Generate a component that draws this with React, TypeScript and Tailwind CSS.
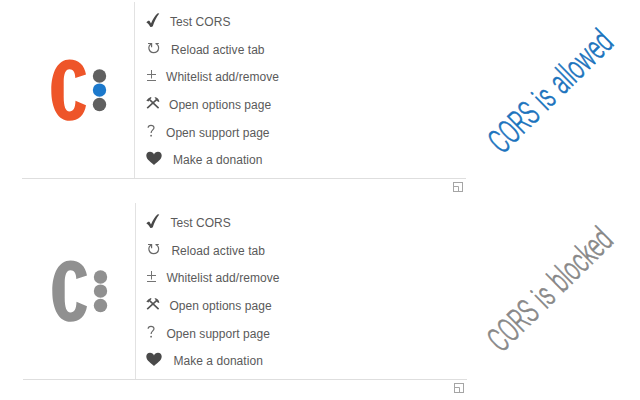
import React from "react";

const glyph = "shrink-0 overflow-visible";

function CheckIcon() {
  return (
    <svg className={glyph} width="14" height="15" viewBox="0 0 14 15">
      <path d="M-0.600 9.400C0.400 8 1.600 7.500 2.600 8L4 10.400C5.800 6 8.200 2.400 10.800 0.300L12.300 0.500C9.500 4 7.300 8.500 5.800 13.200C5.100 14 3.800 14.100 3.200 13.700C2.300 11.700 1.100 10.200 -0.600 9.400Z" fill="#484848" />
    </svg>
  );
}

function ReloadIcon() {
  return (
    <svg className={glyph} width="13" height="12" viewBox="0 0 13 12">
      <path d="M0 1.500H3.600V5.200M3.500 1.700C1.500 2.900 0.500 4.900 1 7C1.600 9.400 3.300 10.600 5.500 10.600C8.200 10.600 10.300 8.900 10.600 6.400C10.800 4.200 9.700 2.500 7.600 1.500H10.800" fill="none" stroke="#686868" strokeWidth="1.200" />
    </svg>
  );
}

function PlusMinusIcon() {
  return (
    <svg className={glyph} width="9" height="11" viewBox="0 0 9 11">
      <path d="M0 4.500H9M4.500 0V8.500M0 10.500H9" fill="none" stroke="#747474" strokeWidth="1" />
    </svg>
  );
}

function ToolsIcon() {
  return (
    <svg className={glyph} width="13" height="12" viewBox="0 0 13 12">
      <path d="M2.800 2.800L11.600 11.200M9.300 2.800L0.200 11.200" fill="none" stroke="#555" strokeWidth="1.600" />
      <path d="M-0.700 3.800C0.300 2 1.900 0.600 3.900 -0.100L4.500 0.700L3.500 2.300L1.500 4.400L0.300 4Z" fill="#555" />
      <path d="M7.500 0.200C10 0.200 12.300 2.200 12.300 4.900L11.200 4.700L9.200 3.500L8.500 1.700Z" fill="#555" />
    </svg>
  );
}

function QuestionIcon() {
  return (
    <svg className={glyph} width="8" height="12" viewBox="0 0 8 12">
      <path d="M0.100 2.800C0.200 1 1.300 0.300 3 0.300C4.900 0.300 6 1.200 6 2.700C6 4.800 3.100 5 3.100 8" fill="none" stroke="#686868" strokeWidth="1.200" />
      <circle cx="3.100" cy="10.700" r="0.900" fill="#686868" />
    </svg>
  );
}

function HeartIcon() {
  return (
    <svg className={glyph} width="16" height="14" viewBox="0 0 16 14">
      <path d="M8 13.100C5.500 10.500 0.300 7.800 0.300 3.600C0.300 1.200 1.800 -0.200 4 -0.200C5.900 -0.200 7.400 0.900 8 2.400C8.600 0.900 10.100 -0.200 12 -0.200C14.200 -0.200 15.700 1.200 15.700 3.600C15.700 7.800 10.500 10.500 8 13.100Z" fill="#494949" />
    </svg>
  );
}

const items = [
  { label: "Test CORS", icon: <CheckIcon />, offset: "pl-3", cell: "w-[23px]" },
  { label: "Reload active tab", icon: <ReloadIcon />, offset: "pl-[13px]", cell: "w-[23px]" },
  { label: "Whitelist add/remove", icon: <PlusMinusIcon />, offset: "pl-3", cell: "w-[19px]" },
  { label: "Open options page", icon: <ToolsIcon />, offset: "pl-3", cell: "w-[22px]" },
  { label: "Open support page", icon: <QuestionIcon />, offset: "pl-[13px]", cell: "w-[18px]" },
  { label: "Make a donation", icon: <HeartIcon />, offset: "pl-[11px]", cell: "w-[27px]" },
];

function Logo({ active }: { active: boolean }) {
  const letter = active ? "#ee5529" : "#909090";
  const dot = active ? "#606060" : "#909090";
  return (
    <svg className="ml-[29px] mt-[57px] shrink-0" width="57" height="63" viewBox="0 0 57 63">
      <path d="M35 15.500C33.500 6 27.500 0.500 18.500 0.500C7 0.500 0.300 13 0.300 31C0.300 49.500 7 61.800 18.500 61.800C27.500 61.800 33.500 56 35 46.300L24.500 41.800C24.200 49.500 22.300 52.500 18.500 52.500C14.500 52.500 12.700 47 12.700 38V23C12.700 15 14.500 10.300 18.500 10.300C22.300 10.300 24.200 13.300 24.300 19Z" fill={letter} />
      <circle cx="48.500" cy="17" r="6.700" fill={dot} />
      <circle cx="48.500" cy="31.100" r="6.700" fill={active ? "#1c79cc" : dot} />
      <circle cx="48.500" cy="45.500" r="6.700" fill={dot} />
    </svg>
  );
}

function Panel({ active }: { active: boolean }) {
  return (
    <section className="w-[444px]">
      <div className="flex h-[177px] border-b border-[#dedede]">
        <div className="flex w-[113px] items-start border-r border-[#e2e2e2]">
          <Logo active={active} />
        </div>
        <ul className={`pt-[6px] text-xs tracking-[0.05px] text-[#5a5a5a] ${active ? "" : "-ml-[0.6px]"}`}>
          {items.map((item) => (
            <li key={item.label} className={`flex h-[27.7px] items-center ${item.offset}`}>
              <span className={`flex shrink-0 pb-[3px] ${item.cell}`}>{item.icon}</span>
              <span className="whitespace-nowrap">{item.label}</span>
            </li>
          ))}
        </ul>
      </div>
      <div className="flex justify-end pr-[3px] pt-[3px]">
        <svg width="10" height="10" viewBox="0 0 10 10" fill="none" stroke="#a5a5a5">
          <rect x="0.500" y="0.500" width="9" height="9" />
          <path d="M0.500 4.500H5.500V9.500" />
        </svg>
      </div>
    </section>
  );
}

export default function App() {
  return (
    <main className="flex h-[400px] w-[640px] overflow-hidden bg-white font-['Liberation_Sans',Arial,sans-serif]">
      <div className="flex w-[468px] flex-col pl-[22px] pt-[2px]">
        <Panel active={true} />
        <div className="pl-[1px] pt-[11px]">
          <Panel active={false} />
        </div>
      </div>
      <div className="flex w-[164px] flex-col items-center">
        <div className="flex h-[182px] items-center justify-center">
          <p className="-rotate-[44.5deg] scale-x-[0.635] whitespace-nowrap font-['Roboto',sans-serif] text-[34px] font-light text-[#1b73bd] [word-spacing:3px] [-webkit-text-stroke:0.7px_#1b73bd]">CORS is allowed</p>
        </div>
        <div className="flex h-[214px] items-center justify-center">
          <p className="-rotate-[44.5deg] scale-x-[0.635] whitespace-nowrap font-['Roboto',sans-serif] text-[34px] font-light text-[#888] [word-spacing:3px] [-webkit-text-stroke:0.7px_#888]">CORS is blocked</p>
        </div>
      </div>
    </main>
  );
}
